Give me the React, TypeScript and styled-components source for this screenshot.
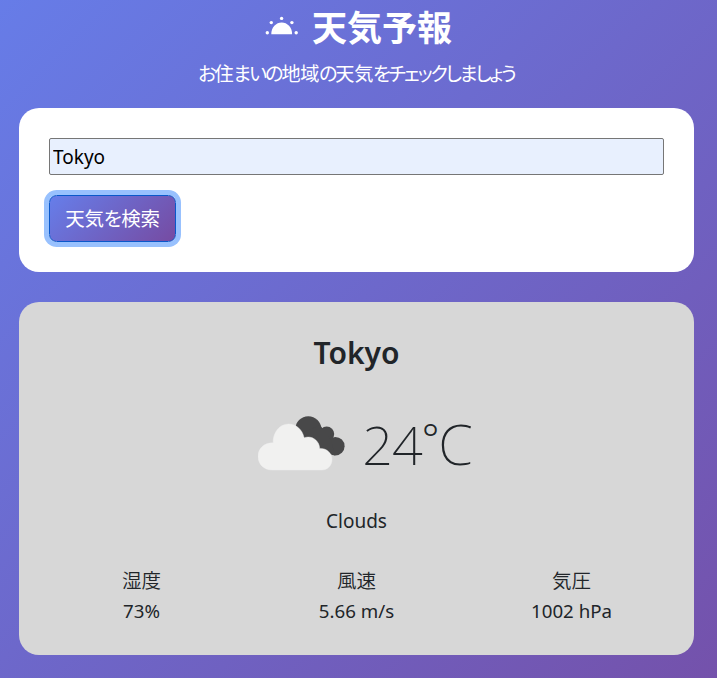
import React from "react";
import styled, { createGlobalStyle } from "styled-components";

const GlobalStyle = createGlobalStyle`
  *, *::before, *::after { box-sizing: border-box; }
  html, body { margin: 0; padding: 0; }
  body {
    font-family: "Noto Sans", "Noto Sans CJK JP", sans-serif;
    color: #212529;
  }
`;

const Page = styled.main`
  height: 678px;
  overflow: hidden;
  padding: 0 23px 0 19px;
  background: linear-gradient(135deg, #667eea -4%, #764ba2 115%);
`;

const Header = styled.header`
  height: 108px;
  display: flex;
  flex-direction: column;
  align-items: center;
  color: #fff;
`;

const Title = styled.h1`
  margin: 0;
  height: 52px;
  padding-left: 4px;
  display: flex;
  align-items: center;
  gap: 13px;
  font: 700 35px/52px "Noto Sans CJK JP", sans-serif;
`;

const Subtitle = styled.p`
  margin: 6px 0 0;
  font: 400 19.2px/30px "Noto Sans CJK JP", sans-serif;
  font-feature-settings: "palt";
  white-space: nowrap;
`;

const Kana = styled.span`
  letter-spacing: -2.1px;
`;

const Kanji = styled.span`
  letter-spacing: -0.4px;
`;

const Card = styled.section<{ $tone: string; $height: number }>`
  height: ${(p) => p.$height}px;
  margin-bottom: 30px;
  padding: 30px;
  border-radius: 20px;
  background: ${(p) => p.$tone};
`;

const CityInput = styled.input`
  display: block;
  width: 100%;
  height: 37px;
  margin: 0 0 20px;
  padding: 1px 3px;
  border: 1px solid #767676;
  border-radius: 2px;
  outline: none;
  background: #e8f0fe;
  color: #000;
  font: 400 19px "Noto Sans", sans-serif;
`;

const SearchButton = styled.button`
  display: block;
  width: 127px;
  height: 47px;
  padding: 0 0 2px;
  border: 1px solid #0a58ca;
  border-radius: 7.5px;
  background: linear-gradient(135deg, #667eea 0%, #764ba2 100%);
  box-shadow: 0 0 0 5px #98c1fe;
  color: #fff;
  font: 400 19.5px "Noto Sans CJK JP", sans-serif;
  font-feature-settings: "palt";
  letter-spacing: -0.3px;
  white-space: nowrap;
`;

const City = styled.h2`
  margin: 0;
  font-size: 30px;
  line-height: 42px;
  font-weight: 600;
  text-align: center;
`;

const Current = styled.div`
  height: 125px;
  margin-top: 7px;
  display: flex;
  justify-content: center;
  align-items: center;
  gap: 17px;
  padding-left: 17px;
`;

const Temperature = styled.span`
  display: flex;
  align-items: baseline;
  height: 80px;
  font: 200 54px/78px "Noto Sans", sans-serif;
  letter-spacing: -1px;
`;

const Degree = styled.span`
  align-self: flex-start;
  margin-top: 13px;
  font-size: 41px;
  line-height: 1;
  font-weight: 300;
`;

const Unit = styled.span`
  font-size: 56px;
`;

const Condition = styled.p`
  margin: 0;
  font-size: 19px;
  line-height: 30px;
  text-align: center;
`;

const Metrics = styled.dl`
  margin: 29px -15px 0;
  display: grid;
  grid-template-columns: repeat(3, 1fr);
  text-align: center;
`;

const MetricName = styled.dt`
  font: 350 19.5px/30px "Noto Sans CJK JP", sans-serif;
`;

const MetricValue = styled.dd`
  margin: 0;
  font-size: 18.7px;
  line-height: 31px;
`;

const SunIcon = () => (
  <svg width="34" height="20" viewBox="0 0 34 20" fill="#fff" aria-hidden="true">
    <path d="M6.3 18.2a10.4 11.8 0 0 1 20.8 0z" />
    <circle cx="2.3" cy="16.8" r="1.7" />
    <circle cx="6.3" cy="6.6" r="1.7" />
    <circle cx="16.6" cy="2.4" r="1.7" />
    <circle cx="26.9" cy="6.6" r="1.7" />
    <circle cx="31.2" cy="16.8" r="1.7" />
  </svg>
);

const CloudsIcon = () => (
  <svg width="87" height="55" viewBox="0 0 87 55" aria-hidden="true">
    <g fill="#484849">
      <circle cx="50.3" cy="13.3" r="13" />
      <circle cx="68.7" cy="18" r="7.5" />
      <circle cx="77.3" cy="30.2" r="9.3" />
      <path d="M42 18 62 9l11 15 4 15.5-20-8z" />
    </g>
    <path
      d="M13.7 54C6.2 54 0 48 0 40.4s6-13.8 15.2-13.6C14.7 16.8 21.3 8 30.6 8c7.3 0 13.8 5.3 15.5 13.8 7.4-2.9 15.3 2.6 15.6 10.6C68.6 32 74 37 74 43.5 74 49.5 69.5 54 64 54z"
      fill="#f1f1f0"
      stroke="#f1f1f0"
      strokeWidth="0.4"
    />
  </svg>
);

const metrics = [
  { name: "湿度", value: "73%" },
  { name: "風速", value: "5.66 m/s" },
  { name: "気圧", value: "1002 hPa" },
];

export default function App() {
  return (
    <>
      <GlobalStyle />
      <Page>
        <Header>
          <Title>
            <SunIcon />
            <span>天気予報</span>
          </Title>
          <Subtitle>
            <Kana>お</Kana>
            <Kanji>住</Kanji>
            <Kana>まいの</Kana>
            <Kanji>地域</Kanji>
            <Kana>の</Kana>
            <Kanji>天気</Kanji>
            <Kana>をチェックしましょう</Kana>
          </Subtitle>
        </Header>
        <Card $tone="#fff" $height={164}>
          <CityInput defaultValue="Tokyo" aria-label="Tokyo" />
          <SearchButton type="button">天気を検索</SearchButton>
        </Card>
        <Card $tone="#d7d7d7" $height={353}>
          <City>Tokyo</City>
          <Current>
            <CloudsIcon />
            <Temperature>
              24<Degree>°</Degree>
              <Unit>C</Unit>
            </Temperature>
          </Current>
          <Condition>Clouds</Condition>
          <Metrics>
            {metrics.map((m) => (
              <div key={m.name}>
                <MetricName>{m.name}</MetricName>
                <MetricValue>{m.value}</MetricValue>
              </div>
            ))}
          </Metrics>
        </Card>
      </Page>
    </>
  );
}
